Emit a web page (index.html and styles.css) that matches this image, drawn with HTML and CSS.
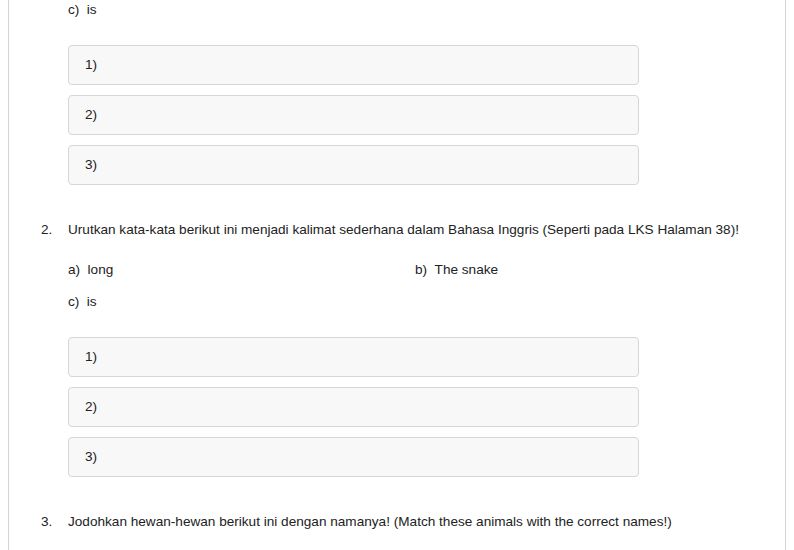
FILE: index.html
```html
<!DOCTYPE html>
<html lang="id">
<head>
    <meta charset="UTF-8">
    <meta name="viewport" content="width=device-width, initial-scale=1.0">
    <title>Latihan Bahasa Inggris</title>
    <link rel="stylesheet" href="styles.css">
</head>
<body>
    <div class="sheet">
        <div class="question first">
            <div class="q-body">
                <div class="options">
                    <div class="option"><span class="opt-label">c)</span>is</div>
                </div>
                <div class="answers">
                    <div class="answer">1)</div>
                    <div class="answer">2)</div>
                    <div class="answer">3)</div>
                </div>
            </div>
        </div>

        <div class="question">
            <div class="q-head">
                <span class="q-num">2.</span>
                <span class="q-text">Urutkan kata-kata berikut ini menjadi kalimat sederhana dalam Bahasa Inggris (Seperti pada LKS Halaman 38)!</span>
            </div>
            <div class="q-body">
                <div class="options">
                    <div class="option"><span class="opt-label">a)</span>long</div>
                    <div class="option"><span class="opt-label">b)</span>The snake</div>
                    <div class="option"><span class="opt-label">c)</span>is</div>
                </div>
                <div class="answers">
                    <div class="answer">1)</div>
                    <div class="answer">2)</div>
                    <div class="answer">3)</div>
                </div>
            </div>
        </div>

        <div class="question">
            <div class="q-head">
                <span class="q-num">3.</span>
                <span class="q-text">Jodohkan hewan-hewan berikut ini dengan namanya! (Match these animals with the correct names!)</span>
            </div>
        </div>
    </div>
</body>
</html>
```

FILE: styles.css
```css
* { margin: 0; padding: 0; box-sizing: border-box; }
body {
    margin: 0 8px;
    font-family: "Liberation Sans", Arial, sans-serif;
    font-size: 13.6px;
    line-height: 20px;
    color: #222;
    background: #fff;
    overflow: hidden;
}
.sheet {
    margin-top: -1px;
    border: 1px solid #d4d4d4;
    border-top: none;
    padding: 0 23px 40px 32px;
    min-height: 600px;
}
.question { margin-bottom: 34px; }
.q-head {
    display: flex;
    padding-top: 1px;
    margin-bottom: 19px;
}
.q-num { flex: 0 0 27px; }
.q-body { padding-left: 27px; }
.options {
    display: grid;
    grid-template-columns: 347px 1fr;
    row-gap: 11px;
    margin-bottom: 25px;
}
.option { padding-top: 1px; }
.opt-label { margin-right: 7.5px; }
.answers {
    display: flex;
    flex-direction: column;
    gap: 10px;
    width: 571px;
}
.answer {
    height: 40px;
    padding: 9px 16px;
    background: #f8f8f8;
    border: 1px solid #d6d6d6;
    border-radius: 4px;
}
```
